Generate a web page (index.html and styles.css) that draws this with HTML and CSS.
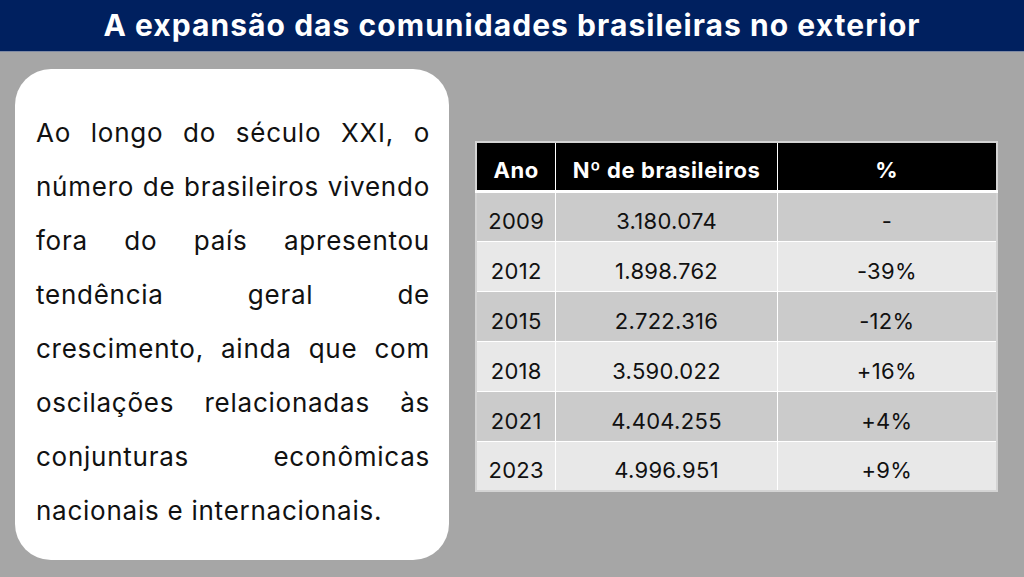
FILE: index.html
```html
<!DOCTYPE html>
<html lang="pt-BR">
<head>
<meta charset="utf-8">
<title>A expansão das comunidades brasileiras no exterior</title>
<link rel="stylesheet" href="styles.css">
</head>
<body>
<header class="title-bar">
  <h1 class="title">A expansão das comunidades brasileiras no exterior</h1>
</header>
<main class="content">
  <section class="card">
    <p class="card-text">
      <span class="line">Ao longo do século XXI, o</span>
      <span class="line">número de brasileiros vivendo</span>
      <span class="line">fora do país apresentou</span>
      <span class="line">tendência geral de</span>
      <span class="line">crescimento, ainda que com</span>
      <span class="line">oscilações relacionadas às</span>
      <span class="line">conjunturas econômicas</span>
      <span class="line last">nacionais e internacionais.</span>
    </p>
  </section>
  <table class="data-table">
    <thead>
      <tr><th class="col-year">Ano</th><th class="col-num">Nº de brasileiros</th><th class="col-pct">%</th></tr>
    </thead>
    <tbody>
      <tr class="odd"><td>2009</td><td>3.180.074</td><td>-</td></tr>
      <tr class="even"><td>2012</td><td>1.898.762</td><td>-39%</td></tr>
      <tr class="odd"><td>2015</td><td>2.722.316</td><td>-12%</td></tr>
      <tr class="even"><td>2018</td><td>3.590.022</td><td>+16%</td></tr>
      <tr class="odd"><td>2021</td><td>4.404.255</td><td>+4%</td></tr>
      <tr class="even"><td>2023</td><td>4.996.951</td><td>+9%</td></tr>
    </tbody>
  </table>
</main>
</body>
</html>
```

FILE: styles.css
```css
* { box-sizing: border-box; }
html, body {
  margin: 0;
  padding: 0;
  width: 1024px;
  height: 577px;
  overflow: hidden;
  background: #a6a6a6;
  font-family: "Inter", "Noto Sans", sans-serif;
}
.title-bar {
  height: 52px;
  background: #00205f;
  display: flex;
  align-items: center;
  justify-content: center;
  border-bottom: 1px solid #7f8aa3;
}
.title {
  margin: 0;
  color: #ffffff;
  font-size: 30px;
  font-weight: 700;
  letter-spacing: 1.05px;
  line-height: 1;
  padding-bottom: 1px;
}
.content {
  display: flex;
  align-items: flex-start;
  padding: 17px 0 0 15px;
  gap: 26px;
}
.card {
  width: 434px;
  height: 491px;
  background: #ffffff;
  border-radius: 36px;
  padding: 37px 19px 22px 21px;
}
.card-text {
  margin: 0;
  font-size: 26px;
  letter-spacing: 0.75px;
  line-height: 54px;
  color: #111111;
}
.line {
  display: block;
  text-align: justify;
  text-align-last: justify;
  white-space: nowrap;
}
.line.last {
  text-align-last: left;
}
.data-table {
  margin-top: 72px;
  width: 523px;
  border-collapse: collapse;
  border: 2px solid #d4d4d4;
  font-size: 22px;
  letter-spacing: 0.3px;
  color: #111111;
}
.data-table th, .data-table td {
  text-align: center;
  vertical-align: bottom;
  padding: 0 6px 7px;
  border: 1px solid #ffffff;
}
.data-table th {
  height: 49px;
  background: #000000;
  color: #ffffff;
  font-weight: 700;
  letter-spacing: 0.6px;
  border-bottom: 3px solid #ffffff;
  border-top: 2px solid #d4d4d4;
}
.data-table td {
  height: 50px;
  font-weight: 400;
}
.col-year { width: 80px; }
.col-num { width: 222px; }
.col-pct { width: 221px; }
.odd td { background: #cbcbcb; }
.even td { background: #e8e8e8; }
```
